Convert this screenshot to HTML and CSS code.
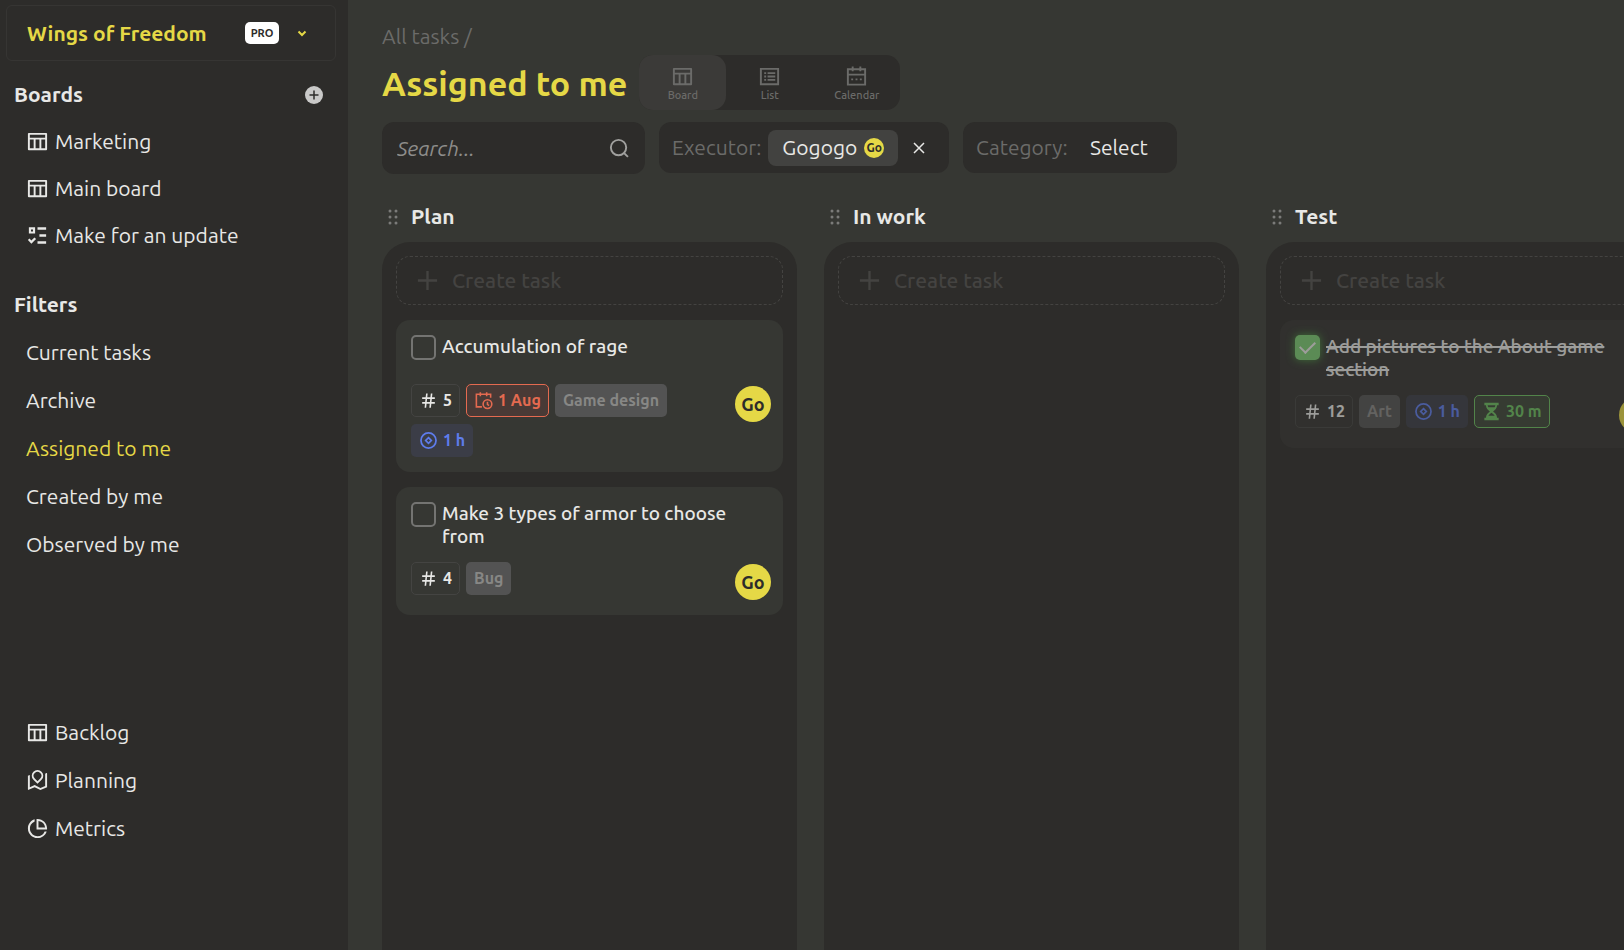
FILE: index.html
```html
<!DOCTYPE html>
<html lang="en">
<head>
<meta charset="utf-8">
<title>Assigned to me</title>
<link rel="stylesheet" href="styles.css">
</head>
<body>
<svg class="defs" aria-hidden="true">
  <symbol id="i-table" viewBox="0 0 24 24"><path fill="currentColor" d="M4 8h16V5H4v3zm10 11v-9h-4v9h4zm2 0h4v-9h-4v9zm-8 0v-9H4v9h4zM3 3h18a1 1 0 0 1 1 1v16a1 1 0 0 1-1 1H3a1 1 0 0 1-1-1V4a1 1 0 0 1 1-1z"/></symbol>
  <symbol id="i-check-list" viewBox="0 0 24 24"><path fill="currentColor" d="M12 3.500h9V6h-9V3.500zm2 7.200h7v2.500h-7v-2.500zm-2 7.300h9v2.500h-9V18zM3 3.500h6.500V10H3V3.500zm2.200 2.200v2.100h2.100V5.700H5.200zM3.600 15.200l2 2L8.800 14l1.700 1.700-4.900 4.900L2 16.800z"/></symbol>
  <symbol id="i-map" viewBox="0 0 24 24"><path fill="currentColor" d="M4 6.143v12.824l5.065-2.170 6 3L20 17.680V4.857l1.303-.558a.5.5 0 0 1 .697.460V19l-7 3-6-3-6.303 2.701a.5.5 0 0 1-.697-.460V7l2-.857zm12.243 5.100L12 15.485l-4.243-4.242a6 6 0 1 1 8.486 0zM12 12.657l2.828-2.829a4 4 0 1 0-5.656 0L12 12.657z"/></symbol>
  <symbol id="i-pie" viewBox="0 0 24 24"><path fill="currentColor" d="M9 2.458v2.124A8.003 8.003 0 0 0 12 20a8.003 8.003 0 0 0 7.419-5h2.123c-1.274 4.057-5.064 7-9.542 7-5.523 0-10-4.477-10-10 0-4.478 2.943-8.268 7-9.542zM12 2c5.523 0 10 4.477 10 10 0 .338-.017.671-.050 1H11V2.050c.329-.033.662-.050 1-.050zm1 2.062V11h6.938A8.004 8.004 0 0 0 13 4.062z"/></symbol>
  <symbol id="i-list" viewBox="0 0 24 24"><path fill="none" stroke="currentColor" stroke-width="2" d="M3 4h18v16H3zM6.500 8.500h2M10 8.500h8M6.500 12h2M10 12h8M6.500 15.500h2M10 15.500h8"/></symbol>
  <symbol id="i-calendar" viewBox="0 0 24 24"><path fill="none" stroke="currentColor" stroke-width="2" d="M3 4.500h18v16H3zM3 10h18M8 1.500v5M16 1.500v5M6.500 15h2M11 15h2M15.500 15h2"/></symbol>
  <symbol id="i-search" viewBox="0 0 24 24"><g fill="none" stroke="currentColor" stroke-width="2"><circle cx="11" cy="11" r="8"/><path d="M16.800 16.800l4 4"/></g></symbol>
  <symbol id="i-grip" viewBox="0 0 12 18"><g fill="currentColor"><circle cx="3" cy="3" r="1.500"/><circle cx="9" cy="3" r="1.500"/><circle cx="3" cy="9" r="1.500"/><circle cx="9" cy="9" r="1.500"/><circle cx="3" cy="15" r="1.500"/><circle cx="9" cy="15" r="1.500"/></g></symbol>
  <symbol id="i-plus" viewBox="0 0 24 24"><path fill="none" stroke="currentColor" stroke-width="2.500" d="M12 2v20M2 12h20"/></symbol>
  <symbol id="i-hash" viewBox="0 0 24 24"><path fill="currentColor" d="M7.784 14l.420-4H4V8h4.415l.525-5h2.011l-.525 5h3.989l.525-5h2.011l-.525 5H20v2h-3.784l-.420 4H20v2h-4.415l-.525 5h-2.011l.525-5H9.585l-.525 5H7.049l.525-5H4v-2h3.784zm2.011 0h3.990l.420-4h-3.990l-.420 4z"/></symbol>
  <symbol id="i-due" viewBox="0 0 24 24"><g fill="none" stroke="currentColor" stroke-width="2"><path d="M10 20H3V4h18v4.500M8 1.500v5M16 1.500v5"/><circle cx="17" cy="16.500" r="5.500"/><path d="M17 13.500v3.500l2 1.500"/></g></symbol>
  <symbol id="i-estimate" viewBox="0 0 24 24"><g fill="none" stroke="currentColor" stroke-width="2.200"><circle cx="12" cy="12" r="9.500"/><path d="M12 8.500l3.500 3.500-3.500 3.500L8.500 12z"/></g></symbol>
  <symbol id="i-hourglass" viewBox="0 0 24 24"><path fill="currentColor" d="M3 1h18v3h-2c0 4-2.500 6-5 8 2.500 2 5 4 5 8h2v3H3v-3h2c0-4 2.500-6 5-8C7.500 10 5 8 5 4H3zM7.100 4c.1 1 .4 1.800.9 2.500h8c.5-.7.8-1.500.9-2.500zM12 13.500c-1.700 1.300-3.200 2.400-4 4h8c-.8-1.600-2.300-2.700-4-4z"/></symbol>
</svg>

<div class="app">
  <aside class="sidebar">
    <button class="workspace" type="button">
      <span class="workspace-name">Wings of Freedom</span>
      <span class="pro">PRO</span>
      <svg class="chevron" viewBox="0 0 10 7"><path d="M1.500 1.500L5 5l3.500-3.500" fill="none" stroke="currentColor" stroke-width="2"/></svg>
    </button>

    <div class="group-head">
      <h2>Boards</h2>
      <button class="add" type="button" aria-label="Add board"><svg viewBox="0 0 18 18"><circle cx="9" cy="9" r="9" fill="currentColor"/><path d="M9 4.500v9M4.500 9h9" stroke="#2d2c2a" stroke-width="1.500"/></svg></button>
    </div>
    <nav class="menu menu-boards">
      <a href="#"><svg class="icon"><use href="#i-table"/></svg>Marketing</a>
      <a href="#"><svg class="icon"><use href="#i-table"/></svg>Main board</a>
      <a href="#"><svg class="icon"><use href="#i-check-list"/></svg>Make for an update</a>
    </nav>

    <div class="group-head filters-head"><h2>Filters</h2></div>
    <nav class="menu menu-plain">
      <a href="#">Current tasks</a>
      <a href="#">Archive</a>
      <a href="#" class="current">Assigned to me</a>
      <a href="#">Created by me</a>
      <a href="#">Observed by me</a>
    </nav>

    <nav class="menu menu-bottom">
      <a href="#"><svg class="icon"><use href="#i-table"/></svg>Backlog</a>
      <a href="#"><svg class="icon"><use href="#i-map"/></svg>Planning</a>
      <a href="#"><svg class="icon"><use href="#i-pie"/></svg>Metrics</a>
    </nav>
  </aside>

  <main class="main">
    <a class="crumb" href="#">All tasks /</a>
    <div class="title-row">
      <h1>Assigned to me</h1>
      <div class="tabs">
        <button type="button" class="tab active"><svg class="icon"><use href="#i-table"/></svg>Board</button>
        <button type="button" class="tab"><svg class="icon"><use href="#i-list"/></svg>List</button>
        <button type="button" class="tab"><svg class="icon"><use href="#i-calendar"/></svg>Calendar</button>
      </div>
    </div>

    <div class="filters">
      <label class="box search"><input type="text" placeholder="Search..." aria-label="Search"><svg class="icon"><use href="#i-search"/></svg></label>
      <div class="box executor">
        <span class="label">Executor:</span>
        <button type="button" class="chip">Gogogo <span class="mini">Go</span></button>
        <button type="button" class="clear" aria-label="Clear executor"><svg viewBox="0 0 12 12"><path d="M1 1l10 10M11 1L1 11" stroke="currentColor" stroke-width="1.500"/></svg></button>
      </div>
      <div class="box category">
        <label class="label" for="category">Category:</label>
        <select id="category"><option>Select</option></select>
      </div>
    </div>

    <div class="board">
      <section class="column">
        <h3><svg class="grip"><use href="#i-grip"/></svg>Plan</h3>
        <div class="lane">
          <button type="button" class="create"><svg class="icon"><use href="#i-plus"/></svg>Create task</button>
          <article class="card">
            <label class="card-title"><input type="checkbox"><span>Accumulation of rage</span></label>
            <div class="card-foot">
              <div class="tags">
                <span class="tag id"><svg class="icon"><use href="#i-hash"/></svg>5</span>
                <span class="tag due"><svg class="icon"><use href="#i-due"/></svg>1 Aug</span>
                <span class="tag cat">Game design</span>
                <span class="tag est"><svg class="icon"><use href="#i-estimate"/></svg>1 h</span>
              </div>
              <span class="avatar">Go</span>
            </div>
          </article>
          <article class="card">
            <label class="card-title"><input type="checkbox"><span>Make 3 types of armor to choose from</span></label>
            <div class="card-foot">
              <div class="tags">
                <span class="tag id"><svg class="icon"><use href="#i-hash"/></svg>4</span>
                <span class="tag cat">Bug</span>
              </div>
              <span class="avatar">Go</span>
            </div>
          </article>
        </div>
      </section>

      <section class="column">
        <h3><svg class="grip"><use href="#i-grip"/></svg>In work</h3>
        <div class="lane">
          <button type="button" class="create"><svg class="icon"><use href="#i-plus"/></svg>Create task</button>
        </div>
      </section>

      <section class="column">
        <h3><svg class="grip"><use href="#i-grip"/></svg>Test</h3>
        <div class="lane">
          <button type="button" class="create"><svg class="icon"><use href="#i-plus"/></svg>Create task</button>
          <article class="card done">
            <label class="card-title"><input type="checkbox" checked><span>Add pictures to the About game section</span></label>
            <div class="card-foot">
              <div class="tags">
                <span class="tag id"><svg class="icon"><use href="#i-hash"/></svg>12</span>
                <span class="tag cat">Art</span>
                <span class="tag est"><svg class="icon"><use href="#i-estimate"/></svg>1 h</span>
                <span class="tag spent"><svg class="icon"><use href="#i-hourglass"/></svg>30 m</span>
              </div>
              <span class="avatar">Go</span>
            </div>
          </article>
        </div>
      </section>
    </div>
  </main>
</div>
</body>
</html>
```

FILE: styles.css
```css
:root {
  --bg: #363733;
  --panel: #2d2c2a;
  --text: #e8e8e6;
  --muted: #6b6b69;
  --accent: #e5d846;
}

* { box-sizing: border-box; }

body {
  margin: 0;
  background: var(--bg);
  color: var(--text);
  font: 21px/23px Ubuntu, "Noto Sans", "Open Sans", sans-serif;
}

button, input, select {
  font: inherit;
  color: inherit;
  background: none;
  border: 0;
  padding: 0;
  margin: 0;
}

a { color: inherit; text-decoration: none; }
h1, h2, h3 { margin: 0; }

.defs { position: absolute; width: 0; height: 0; }
.icon { width: 23px; height: 23px; flex: none; }

.app { display: flex; height: 100vh; overflow: hidden; }

/* Sidebar */
.sidebar {
  flex: 0 0 348px;
  display: flex;
  flex-direction: column;
  background: var(--panel);
  padding: 5px 12px 98px 6px;
}

.workspace {
  display: flex;
  align-items: center;
  height: 56px;
  padding: 0 28px 0 20px;
  border: 1px solid #363533;
  border-radius: 6px;
  color: var(--accent);
  font-weight: 700;
}
.workspace-name { flex: 1; text-align: left; }
.pro {
  width: 34px;
  border-radius: 5px;
  background: #fff;
  color: #2d2c2a;
  font-size: 11px;
  line-height: 22px;
  text-align: center;
}
.chevron { width: 10px; height: 7px; margin-left: 18px; }

.group-head {
  display: flex;
  align-items: center;
  justify-content: space-between;
  height: 47px;
  margin-top: 10px;
  padding: 0 13px 0 8px;
}
.filters-head { margin-top: 22px; }
.group-head h2 { font-size: 21px; }
.add { display: flex; color: #c9c9c8; }
.add svg { width: 18px; height: 18px; }

.menu { display: flex; flex-direction: column; }
.menu a {
  display: flex;
  align-items: center;
  gap: 6px;
  height: 48px;
  padding-left: 20px;
}
.menu-boards a { height: 47px; }
.menu .current { color: var(--accent); }
.menu-bottom { margin-top: auto; }

/* Header */
.main {
  flex: 1;
  min-width: 0;
  display: flex;
  flex-direction: column;
  padding: 25px 0 0 34px;
}
.crumb { color: var(--muted); align-self: flex-start; }

.title-row { display: flex; align-items: center; gap: 12px; margin-top: 7px; }
h1 { color: var(--accent); font-size: 34px; line-height: 40px; }

.tabs { display: flex; background: var(--panel); border-radius: 14px; }
.tab {
  display: flex;
  flex-direction: column;
  align-items: center;
  justify-content: center;
  width: 87px;
  height: 55px;
  padding-top: 2px;
  border-radius: 14px;
  color: #6b6b69;
  font-size: 11px;
  font-weight: 500;
  line-height: 14px;
}
.tab.active { background: #3b3a38; }

.filters { display: flex; align-items: flex-start; gap: 14px; margin-top: 12px; }
.box {
  display: flex;
  align-items: center;
  height: 51px;
  background: var(--panel);
  border-radius: 12px;
}
.search { width: 263px; height: 52px; padding: 0 14px 0 15px; color: #a0a09e; }
.search input { flex: 1; min-width: 0; outline: 0; }
.search input::placeholder { color: #8d8d8b; font-style: italic; opacity: 1; }
.label { color: var(--muted); }
.executor { width: 290px; padding-left: 13px; }
.chip {
  display: flex;
  align-items: center;
  gap: 7px;
  height: 36px;
  margin: 0 15px 0 7px;
  padding: 0 14px;
  border-radius: 8px;
  background: #424240;
}
.mini {
  width: 20px;
  border-radius: 50%;
  background: var(--accent);
  color: #2d2c2a;
  font-size: 12px;
  font-weight: 700;
  line-height: 20px;
  text-align: center;
}
.clear { display: flex; }
.clear svg { width: 12px; height: 12px; }
.category { width: 214px; padding: 0 29px 0 13px; justify-content: space-between; }
.category select { appearance: none; outline: 0; }

/* Board */
.board { flex: 1; min-height: 0; display: flex; gap: 27px; margin-top: 29px; overflow: hidden; }
.column { flex: 0 0 415px; display: flex; flex-direction: column; }
.column h3 {
  display: flex;
  align-items: center;
  gap: 12px;
  padding-left: 5px;
  font-size: 21px;
  line-height: 27px;
}
.grip { width: 12px; height: 18px; color: #7b7b79; }
.lane {
  flex: 1;
  display: flex;
  flex-direction: column;
  gap: 15px;
  margin-top: 12px;
  padding: 14px;
  background: var(--panel);
  border-radius: 28px 28px 0 0;
}
.create {
  display: flex;
  align-items: center;
  gap: 13px;
  height: 49px;
  padding-left: 19px;
  border: 1px dashed #444341;
  border-radius: 14px;
  color: #444341;
  font-weight: 500;
}

.card { padding: 15px 12px 15px 15px; border-radius: 14px; background: var(--bg); }
.card.done { opacity: .6; background: #343431; }
.card-title {
  display: flex;
  gap: 6px;
  min-height: 35px;
  margin-bottom: 14px;
  padding-right: 12px;
  font-size: 19px;
  font-weight: 500;
  line-height: 23px;
}
.done .card-title span { text-decoration: line-through 2px; }
.card-title input {
  appearance: none;
  flex: none;
  width: 25px;
  height: 25px;
  border: 2px solid #747472;
  border-radius: 5px;
}
.card-title input:checked {
  border: 0;
  background: #7bcb72;
  box-shadow: 0 0 8px #4c9b43;
  display: grid;
  place-items: center;
}
.card-title input:checked::before {
  content: "";
  width: 13px;
  height: 7px;
  margin-bottom: 4px;
  border: solid #e8e8e6;
  border-width: 0 0 2px 2px;
  transform: rotate(-45deg);
}
.card-foot { display: flex; align-items: flex-start; justify-content: space-between; gap: 6px; }
.tags { display: flex; flex-wrap: wrap; gap: 7px 6px; }
.tag {
  display: flex;
  align-items: center;
  gap: 5px;
  height: 33px;
  padding: 0 7px;
  border: 1px solid transparent;
  border-radius: 5px;
  font-size: 16px;
  font-weight: 700;
}
.tag .icon { width: 19px; height: 19px; }
.id { border-color: #444442; }
.due { color: #e46a50; border-color: #e46a50; background: #493a36; }
.cat { background: #535353; color: #878785; }
.est { color: #5e7cec; background: #3b3d47; }
.spent { color: #6cbf60; border-color: #6cbf60; background: #3c4638; }
.avatar {
  flex: none;
  width: 36px;
  margin-top: 2px;
  border-radius: 50%;
  background: var(--accent);
  color: #2d2c2a;
  font-size: 18px;
  font-weight: 700;
  line-height: 36px;
  text-align: center;
}
```
